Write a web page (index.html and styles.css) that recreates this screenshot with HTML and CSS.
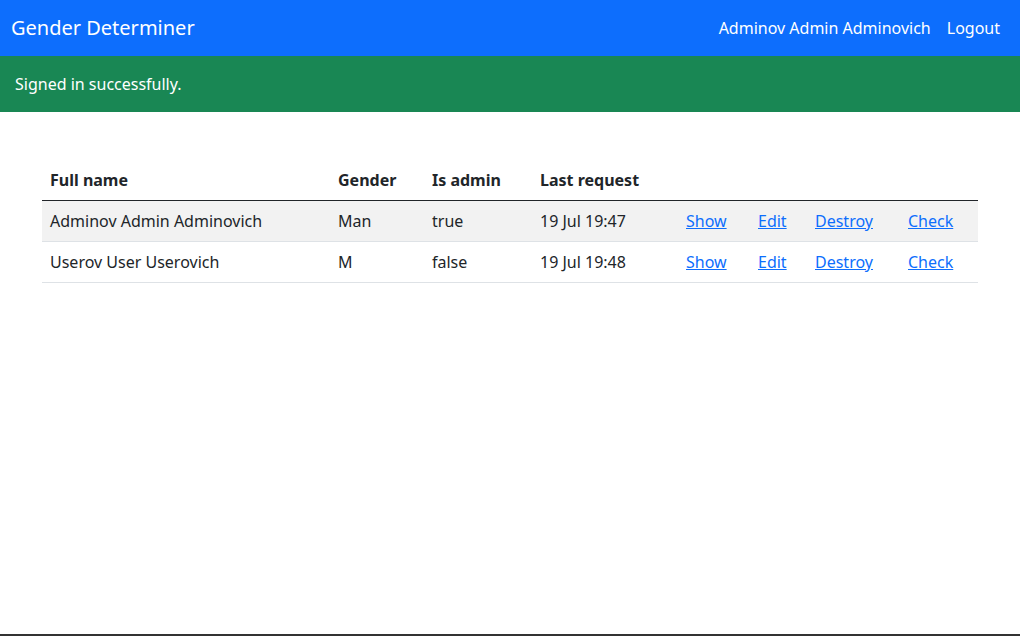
FILE: index.html
```html
<!DOCTYPE html>
<html lang="en">
<head>
<meta charset="utf-8">
<title>Gender Determiner</title>
<link rel="stylesheet" href="styles.css">
</head>
<body>
<div class="page">
  <nav class="navbar">
    <a class="brand" href="#">Gender Determiner</a>
    <ul class="nav">
      <li><a class="nav-link" href="#">Adminov Admin Adminovich</a></li>
      <li><a class="nav-link" href="#">Logout</a></li>
    </ul>
  </nav>
  <div class="alert">Signed in successfully.</div>
  <main class="container">
    <table class="table">
      <thead>
        <tr>
          <th class="c-name">Full name</th>
          <th class="c-gender">Gender</th>
          <th class="c-admin">Is admin</th>
          <th class="c-last">Last request</th>
          <th class="c-show"></th>
          <th class="c-edit"></th>
          <th class="c-destroy"></th>
          <th class="c-check"></th>
        </tr>
      </thead>
      <tbody>
        <tr class="striped">
          <td>Adminov Admin Adminovich</td>
          <td>Man</td>
          <td>true</td>
          <td>19 Jul 19:47</td>
          <td><a href="#">Show</a></td>
          <td><a href="#">Edit</a></td>
          <td><a href="#">Destroy</a></td>
          <td><a href="#">Check</a></td>
        </tr>
        <tr>
          <td>Userov User Userovich</td>
          <td>M</td>
          <td>false</td>
          <td>19 Jul 19:48</td>
          <td><a href="#">Show</a></td>
          <td><a href="#">Edit</a></td>
          <td><a href="#">Destroy</a></td>
          <td><a href="#">Check</a></td>
        </tr>
      </tbody>
    </table>
  </main>
</div>
<footer class="footer"></footer>
</body>
</html>
```

FILE: styles.css
```css
* { box-sizing: border-box; }
html, body { margin: 0; padding: 0; }
body {
  font-family: "Noto Sans", "Open Sans", sans-serif;
  font-size: 16px;
  line-height: 1.5;
  color: #212529;
  background: #fff;
}
.page { min-height: 634px; }
.navbar {
  background: #0d6efd;
  height: 56px;
  display: flex;
  align-items: center;
  justify-content: space-between;
  padding: 0 12px 0 11px;
}
.brand {
  color: #fff;
  font-size: 20px;
  text-decoration: none;
  line-height: 30px;
}
.nav {
  list-style: none;
  margin: 0;
  padding: 0;
  display: flex;
}
.nav-link {
  display: block;
  padding: 8px;
  color: #fff;
  text-decoration: none;
}
.alert {
  background: #198754;
  color: #fff;
  height: 56px;
  padding: 16px 15px;
}
.container {
  width: 960px;
  margin: 0 auto;
  padding: 48px 12px 0;
}
.table {
  width: 936px;
  border-collapse: collapse;
  table-layout: fixed;
}
.table th, .table td {
  padding: 8px;
  text-align: left;
  vertical-align: top;
}
.table th { font-weight: 700; border-bottom: 1px solid #212529; }
.table td { border-bottom: 1px solid #dee2e6; }
.striped td { background: #f2f2f2; }
.table a { color: #0d6efd; text-decoration: underline; }
.c-name { width: 288px; }
.c-gender { width: 94px; }
.c-admin { width: 108px; }
.c-last { width: 146px; }
.c-show { width: 72px; }
.c-edit { width: 57px; }
.c-destroy { width: 93px; }
.c-check { width: 78px; }
.footer {
  border-top: 2px solid #333;
  height: 2px;
}
```
